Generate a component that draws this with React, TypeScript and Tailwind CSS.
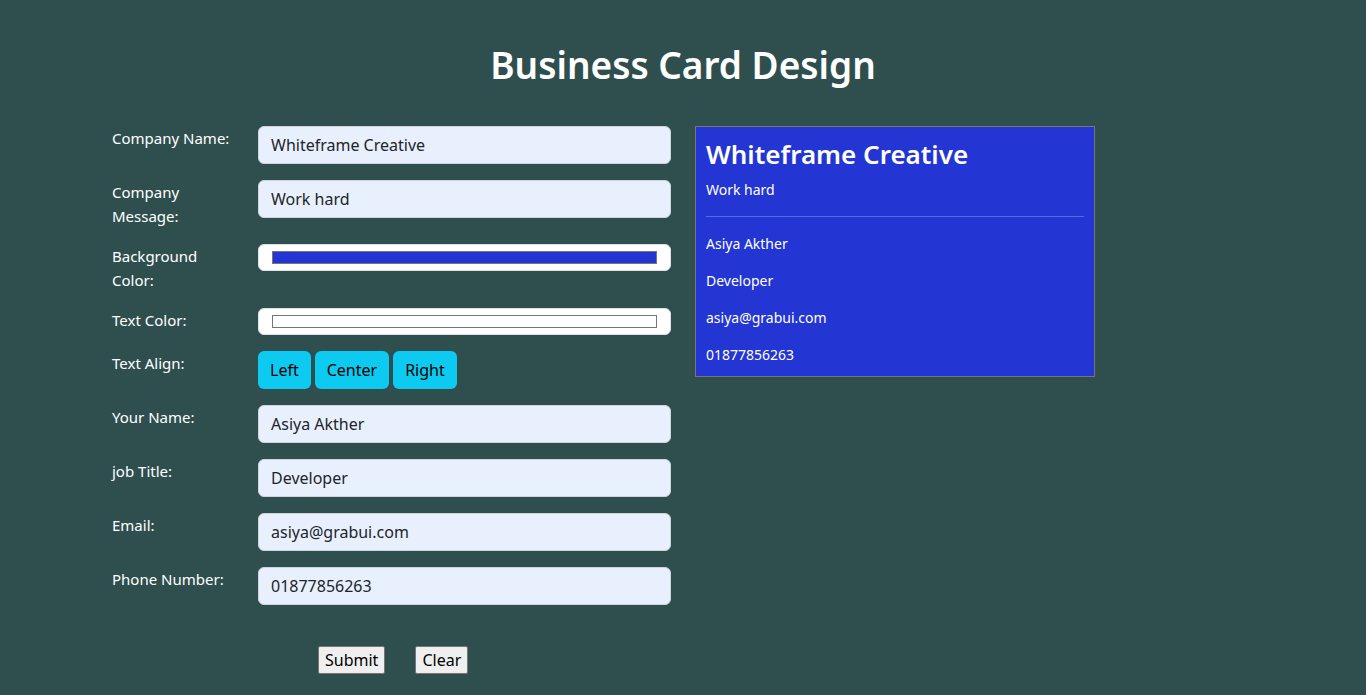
import { useState } from 'react';

type Align = 'left' | 'center' | 'right';

const App = () => {
  const [card, setCard] = useState({
    company: 'Whiteframe Creative',
    message: 'Work hard',
    bg: '#2335d3',
    color: '#ffffff',
    align: 'left' as Align,
    name: 'Asiya Akther',
    job: 'Developer',
    email: 'asiya@grabui.com',
    phone: '01877856263',
  });

  const textFields = [
    { label: 'Company Name:', name: 'company' },
    { label: 'Company Message:', name: 'message' },
  ];

  const personFields = [
    { label: 'Your Name:', name: 'name' },
    { label: 'job Title:', name: 'job' },
    { label: 'Email:', name: 'email' },
    { label: 'Phone Number:', name: 'phone' },
  ];

  const handleChange = (e: React.ChangeEvent<HTMLInputElement>) => {
    const { name, value } = e.target;
    setCard((prev) => ({ ...prev, [name]: value }));
  };

  const inputClass =
    'w-[413px] h-[38px] px-[12px] rounded-[6px] border border-[#ced4da] bg-[#e8f0fe] text-[16px] text-[#212529] outline-none';

  const alignClass = {
    left: 'text-left',
    center: 'text-center',
    right: 'text-right',
  }[card.align];

  return (
    <div
      className="min-h-screen bg-[#2f4f4f] text-white"
      style={{ fontFamily: '"Noto Sans", "Open Sans", sans-serif' }}
    >
      <h1 className="pt-[41px] text-center text-[37px] leading-[48px] font-semibold">Business Card Design</h1>

      <div className="mt-[37px] flex items-start gap-[24px] pl-[112px]">
        {/* form */}
        <div className="flex flex-col">
          <div className="flex flex-col gap-[16px]">
            {textFields.map((field) => (
              <div key={field.name} className="flex gap-[18px]">
                <label className="w-[128px] text-[15px] leading-[24px]">{field.label}</label>
                <input
                  name={field.name}
                  value={card[field.name as keyof typeof card]}
                  onChange={handleChange}
                  className={inputClass}
                />
              </div>
            ))}

            <div className="flex gap-[18px]">
              <label className="w-[128px] text-[15px] leading-[24px]">Background Color:</label>
              <div className="w-[413px] h-[27px] px-[13px] py-[6px] rounded-[6px] bg-white border border-[#dee2e6]">
                <div className="h-full border border-[#767676]" style={{ backgroundColor: card.bg }} />
              </div>
            </div>

            <div className="flex gap-[18px]">
              <label className="w-[128px] text-[15px] leading-[24px]">Text Color:</label>
              <div className="w-[413px] h-[27px] px-[13px] py-[6px] rounded-[6px] bg-white border border-[#dee2e6]">
                <div className="h-full border border-[#767676]" style={{ backgroundColor: card.color }} />
              </div>
            </div>

            <div className="flex gap-[18px]">
              <label className="w-[128px] text-[15px] leading-[24px]">Text Align:</label>
              <div className="flex gap-[4px]">
                {(['left', 'center', 'right'] as Align[]).map((a) => (
                  <button
                    key={a}
                    onClick={() => setCard((prev) => ({ ...prev, align: a }))}
                    className="h-[38px] px-[12px] rounded-[6px] bg-[#0dcaf0] text-[16px] text-black capitalize"
                  >
                    {a}
                  </button>
                ))}
              </div>
            </div>

            {personFields.map((field) => (
              <div key={field.name} className="flex gap-[18px]">
                <label className="w-[128px] text-[15px] leading-[24px]">{field.label}</label>
                <input
                  name={field.name}
                  value={card[field.name as keyof typeof card]}
                  onChange={handleChange}
                  className={inputClass}
                />
              </div>
            ))}
          </div>

          <div className="mt-[41px] ml-[206px] flex gap-[30px]">
            <button className="h-[28px] px-[6px] bg-[#efefef] border border-[#767676] rounded-[2px] text-[16px] text-black">
              Submit
            </button>
            <button className="h-[28px] px-[6px] bg-[#efefef] border border-[#767676] rounded-[2px] text-[16px] text-black">
              Clear
            </button>
          </div>
        </div>

        {/* preview */}
        <div
          className={`w-[400px] border border-[#777] px-[10px] pt-[12px] pb-[11px] ${alignClass}`}
          style={{ backgroundColor: card.bg, color: card.color }}
        >
          <h2 className="text-[26px] leading-[31px] font-semibold">{card.company}</h2>
          <p className="mt-[9px] text-[14px] leading-[21px]">{card.message}</p>
          <hr className="my-[16px] border-t border-white/25" />
          <div className="flex flex-col gap-[16px] text-[14px] leading-[21px]">
            <p>{card.name}</p>
            <p>{card.job}</p>
            <p>{card.email}</p>
            <p>{card.phone}</p>
          </div>
        </div>
      </div>
    </div>
  );
};

export default App;
